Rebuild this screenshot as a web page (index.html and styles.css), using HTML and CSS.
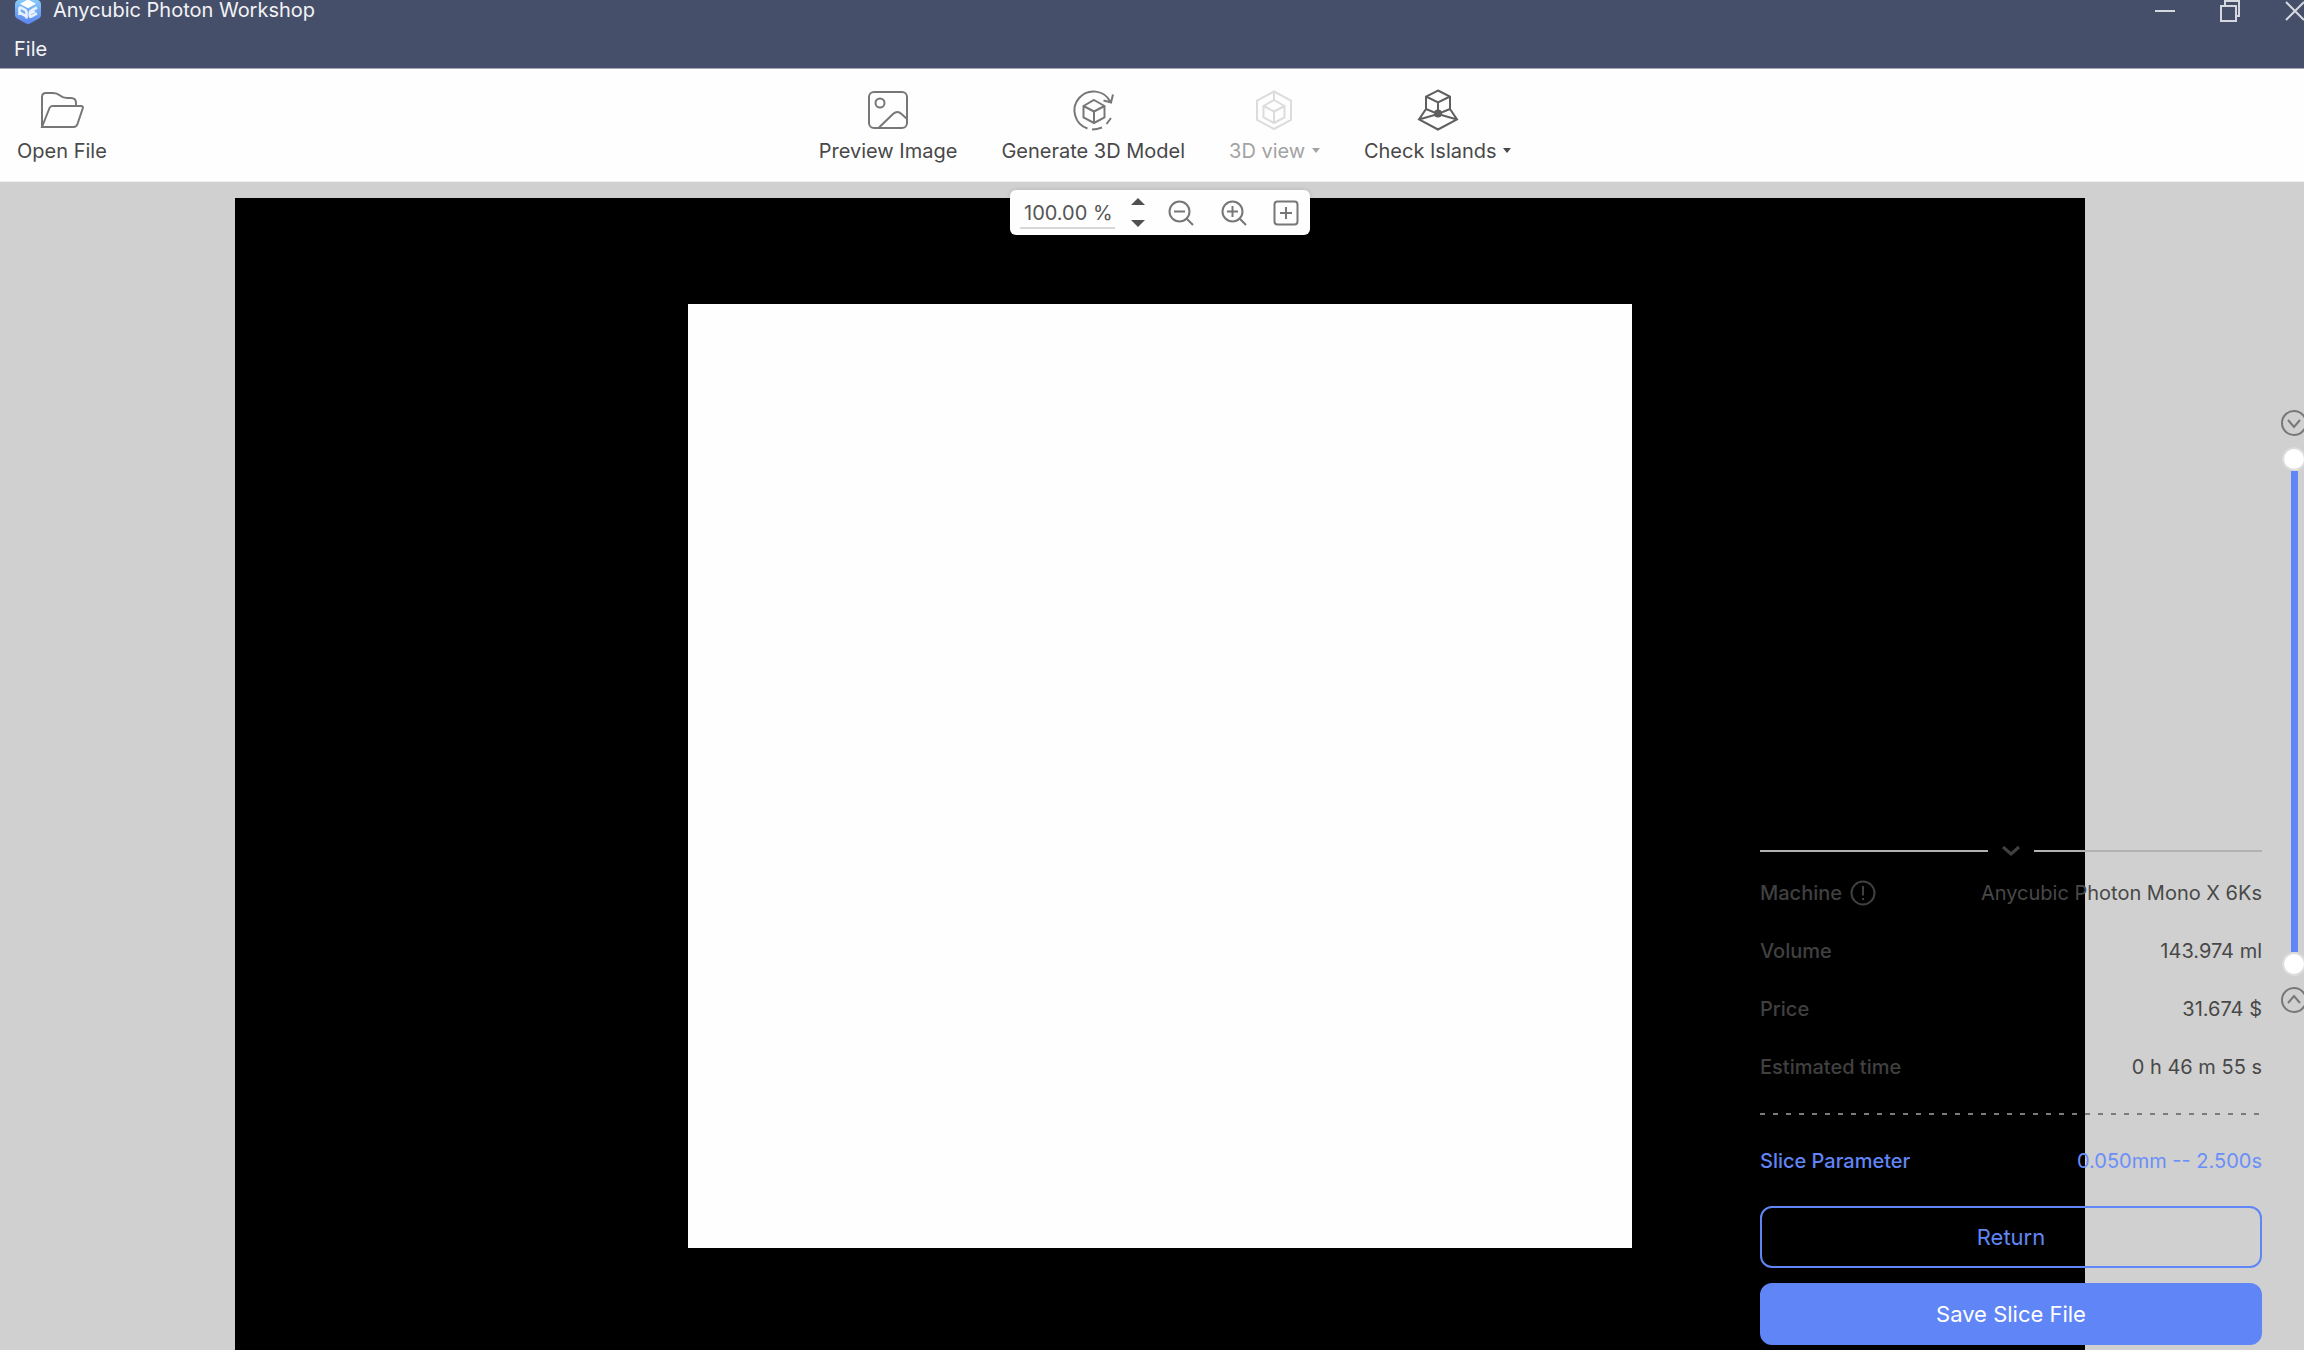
FILE: index.html
```html
<!DOCTYPE html>
<html lang="en">
<head>
<meta charset="utf-8">
<title>Anycubic Photon Workshop</title>
<link rel="stylesheet" href="styles.css">
</head>
<body>
<div class="app">
  <header class="header">
    <div class="titlebar">
      <svg class="logo" width="28" height="32" viewBox="0 0 28 32" aria-hidden="true">
        <defs><linearGradient id="logo-fill" x1="0" y1="0" x2="0" y2="1"><stop offset="0" stop-color="#8fd8fb"/><stop offset="1" stop-color="#5b83ee"/></linearGradient></defs>
        <path d="M12 1.600q2-1.200 4 0l9 5q2 1.200 2 3.400v11q0 2.400-2 3.600l-9 5q-2 1.200-4 0l-9-5q-2-1.200-2-3.600v-11q0-2.200 2-3.400z" fill="url(#logo-fill)"/>
        <path d="M14 5.500l8 4.300-8 4.400-8-4.400z" fill="#fff"/>
        <path d="M5.500 21v-6.500q0-1.500 1.500-.8l4 2.200q1.500.8 1.500 2.500v6M5.500 18.500l7 3.800" fill="none" stroke="#e8f2ff" stroke-width="2.600"/>
        <path d="M23 13.500l-5.500 3q-1.800 1-1.800 2.800v2q0 2 1.800 1l5.500-3M16 19.500l5-2.500" fill="none" stroke="#e8f2ff" stroke-width="2.600"/>
      </svg>
      <h1 class="title">Anycubic Photon Workshop</h1>
      <div class="window-buttons">
        <button class="icon-button" type="button" aria-label="Minimize"><svg width="20" height="22" viewBox="0 0 20 22"><path d="M0 11h20"/></svg></button>
        <button class="icon-button" type="button" aria-label="Restore"><svg width="20" height="22" viewBox="0 0 20 22"><path d="M1 6h15v15H1zM5 6V1h14v15h-3"/></svg></button>
        <button class="icon-button" type="button" aria-label="Close"><svg width="20" height="22" viewBox="0 0 20 22"><path d="M1 2l18 18M19 2L1 20"/></svg></button>
      </div>
    </div>
    <nav class="menubar"><button class="menu" type="button">File</button></nav>
  </header>

  <div class="toolbar" role="toolbar" aria-label="Main">
    <button class="tool" type="button">
      <svg width="44" height="44" viewBox="0 0 44 44"><path d="M2 39V9q0-4 4-4h7q4 0 7 2.500t7 2.500h4q5 0 5 5v2.500M2 39L9.500 20q.8-2 3-2H41q2.500 0 1.700 2.500L37.500 36q-1 3-4 3z"/></svg>
      <span>Open File</span>
    </button>
    <div class="tool-group">
      <button class="tool" type="button">
        <svg width="44" height="44" viewBox="0 0 44 44"><rect x="3" y="4" width="38" height="36" rx="5"/><circle cx="14" cy="15" r="4.500"/><path d="M13 39.500L27 26q4.500-4 8.500 0l5 4.500"/></svg>
        <span>Preview Image</span>
      </button>
      <button class="tool" type="button">
        <svg width="44" height="44" viewBox="0 0 44 44"><path d="M16.500 40.500A19 19 0 1 1 39.500 14M32.500 12.500l7.500 2 2-8M21 41.500q5 0 10-2M35.500 36l4.500-6"/><path d="M23 12l10.500 6v11.500L23 35l-10.500-5.500V18zM12.500 18L23 23.500 33.500 18M23 23.500V35"/></svg>
        <span>Generate 3D Model</span>
      </button>
      <button class="tool" type="button" disabled>
        <svg width="44" height="44" viewBox="0 0 44 44"><path d="M22 3.500l17 9v19.500l-17 9-17-9V12.500zM22 12l10.500 6v11.500L22 35l-10.500-5.500V18zM11.500 18L22 23.500 32.500 18M22 23.500V35M22 3.500V12"/></svg>
        <span>3D view <i class="caret"></i></span>
      </button>
      <button class="tool tool-strong" type="button">
        <svg width="44" height="44" viewBox="0 0 44 44"><path d="M22 2.500l12 6V21L22 26 10 21V8.500zM10 8.500l12 6 12-6M22 14.500V26M10 21L3 31.500l19 10 19-10L34 21M3 31.500L22 26l19 5.500"/><circle class="dot" cx="22" cy="25.500" r="3"/></svg>
        <span>Check Islands <i class="caret"></i></span>
      </button>
    </div>
  </div>

  <main class="stage">
    <div class="canvas"><div class="layer"></div></div>

    <div class="zoombar">
      <input class="zoom-value" type="text" value="100.00 %" aria-label="Zoom">
      <div class="stepper">
        <button class="step step-up" type="button" aria-label="Increase zoom"></button>
        <button class="step step-down" type="button" aria-label="Decrease zoom"></button>
      </div>
      <div class="zoom-buttons">
        <button class="icon-button" type="button" aria-label="Zoom out"><svg width="26" height="26" viewBox="0 0 26 26"><circle cx="11.500" cy="11.500" r="10"/><path d="M6 11.500h11M18.500 18.500l6.500 6.500"/></svg></button>
        <button class="icon-button" type="button" aria-label="Zoom in"><svg width="26" height="26" viewBox="0 0 26 26"><circle cx="11.500" cy="11.500" r="10"/><path d="M6 11.500h11M11.500 6v11M18.500 18.500l6.500 6.500"/></svg></button>
        <button class="icon-button" type="button" aria-label="Fit"><svg width="26" height="26" viewBox="0 0 26 26"><rect x="1.500" y="1.500" width="23" height="23" rx="3"/><path d="M7 13h12M13 7v12"/></svg></button>
      </div>
    </div>

    <section class="panel" aria-label="Slice result">
      <button class="collapse" type="button" aria-label="Collapse"><svg width="18" height="12" viewBox="0 0 18 12"><path d="M1 2l8 7 8-7"/></svg></button>
      <dl class="facts">
        <div class="fact"><dt>Machine <svg width="26" height="26" viewBox="0 0 26 26" aria-hidden="true"><circle cx="13" cy="13" r="11.500"/><path d="M13 6v9.500M13 18v2"/></svg></dt><dd>Anycubic Photon Mono X 6Ks</dd></div>
        <div class="fact"><dt>Volume</dt><dd>143.974 ml</dd></div>
        <div class="fact"><dt>Price</dt><dd>31.674 $</dd></div>
        <div class="fact"><dt>Estimated time</dt><dd>0 h 46 m 55 s</dd></div>
      </dl>
      <div class="dashes"></div>
      <div class="fact parameter"><a class="parameter-link" href="#">Slice Parameter</a><span>0.050mm -- 2.500s</span></div>
      <button class="action" type="button">Return</button>
      <button class="action action-primary" type="button">Save Slice File</button>
    </section>

    <div class="layers">
      <button class="icon-button" type="button" aria-label="Layer down"><svg width="26" height="26" viewBox="0 0 26 26"><circle cx="13" cy="13" r="12"/><path d="M7 10l6 7 6-7"/></svg></button>
      <div class="range">
        <input class="handle" type="range" min="0" max="100" value="100" aria-label="Top layer">
        <input class="handle" type="range" min="0" max="100" value="0" aria-label="Bottom layer">
      </div>
      <button class="icon-button" type="button" aria-label="Layer up"><svg width="26" height="26" viewBox="0 0 26 26"><circle cx="13" cy="13" r="12"/><path d="M7 16l6-7 6 7"/></svg></button>
    </div>
  </main>
</div>
</body>
</html>
```
FILE: styles.css
```css
* { box-sizing: border-box; }

body {
  margin: 0;
  overflow: hidden;
  font-family: Inter, "Liberation Sans", sans-serif;
  font-size: 20px;
  line-height: 24px;
  color: #484848;
}

button {
  margin: 0;
  padding: 0;
  border: 0;
  background: none;
  font: inherit;
  color: inherit;
}

svg {
  display: block;
  fill: none;
  stroke: currentColor;
  stroke-width: 2;
}

/* A maximized window runs a little past the right edge of the screen. */
.app {
  display: flex;
  flex-direction: column;
  height: 100vh;
  margin-right: -16px;
}

.header {
  height: 69px;
  padding-left: 14px;
  overflow: hidden;
  background: #464f69;
  border-bottom: 1px solid #a5a9b6;
  color: #f2f3f6;
}

.titlebar {
  display: flex;
  align-items: center;
  height: 32px;
  margin-top: -6px;
  padding-right: 15px;
}

.logo { stroke: none; }

.title {
  margin: 0 0 0 11px;
  font-size: 20px;
  font-weight: 400;
  line-height: 20px;
}

.window-buttons {
  display: flex;
  gap: 45px;
  margin-left: auto;
  color: #d5d8df;
}

.titlebar .icon-button svg { margin-top: 2px; }

.menubar { padding-top: 11px; }
.menu { display: block; }

.toolbar {
  display: grid;
  grid-template-columns: 1fr auto 1fr;
  height: 113px;
  padding: 19px 17px 0;
  background: #fefefe;
  border-bottom: 1px solid #eeeeee;
}

.tool {
  display: flex;
  flex-direction: column;
  align-items: center;
  gap: 7px;
  justify-self: start;
  align-self: start;
}

.tool svg { color: #777777; }
.tool-strong svg { color: #5f5f5f; }
.tool .dot { fill: currentColor; }
.tool:disabled { color: #a3a3a3; }
.tool:disabled svg { color: #dcdcdc; }

.tool-group {
  display: flex;
  gap: 44px;
  padding-left: 10px;
}

.caret {
  display: inline-block;
  margin-left: 1px;
  vertical-align: 5px;
  border: 4px solid transparent;
  border-top: 5px solid currentColor;
  border-bottom: 0;
}

.stage {
  position: relative;
  display: flex;
  flex: 1;
  min-height: 0;
  padding: 16px 235px 0;
  background: #d0d0d0;
}

.canvas {
  flex: 1;
  padding-top: 106px;
  background: #000000;
}

.layer {
  width: 51%;
  aspect-ratio: 1;
  margin: 0 auto;
  background: #fefefe;
}

/* Floating controls over the canvas */
.zoombar {
  position: absolute;
  top: 8px;
  left: 50%;
  display: flex;
  width: 300px;
  height: 45px;
  margin-left: -150px;
  padding: 0 11px 0 10px;
  background: #fefefe;
  border-radius: 6px;
  box-shadow: 0 0 4px #00000022;
}

.zoom-value {
  width: 95px;
  height: 39px;
  padding: 8px 0 0 4px;
  border: 0;
  border-bottom: 2px solid #d8d8d8;
  background: none;
  font: inherit;
  color: #555555;
}

.stepper {
  display: flex;
  flex-direction: column;
  justify-content: space-between;
  margin-left: 16px;
  padding: 8px 0;
}

.step {
  border: 7px solid transparent;
  color: #505050;
}

.step-up { border-top: 0; border-bottom: 7px solid #505050; }
.step-down { border-bottom: 0; border-top: 7px solid #505050; }

.zoom-buttons {
  display: flex;
  flex: 1;
  align-items: center;
  justify-content: space-between;
  padding-left: 23px;
  color: #777777;
}

.panel {
  position: absolute;
  right: 58px;
  bottom: 5px;
  display: flex;
  flex-direction: column;
  width: 502px;
}

.collapse {
  display: flex;
  align-items: center;
  gap: 14px;
  height: 14px;
  color: #404040;
}

.collapse::before,
.collapse::after {
  content: "";
  flex: 1;
  height: 2px;
  background: #b2b2b2;
}

.collapse svg { stroke-width: 3; }

.facts {
  margin: 6px 0 0;
  line-height: 58px;
}

.fact {
  display: flex;
  justify-content: space-between;
}

.fact dt {
  display: flex;
  align-items: center;
  gap: 8px;
  font-weight: 500;
  color: #404040;
}

.fact dd { margin: 0; }

.dashes {
  height: 2px;
  margin-top: 17px;
  background: repeating-linear-gradient(90deg, #7c7c7c 0 5px, transparent 5px 13px);
}

.parameter {
  margin: 34px 0 33px;
  color: #6a8ff8;
}

.parameter-link {
  font-weight: 500;
  color: #6085f6;
  text-decoration: none;
}

.action {
  height: 62px;
  border: 2px solid #6085f6;
  border-radius: 12px;
  font-size: 22px;
  color: #6085f6;
}

.action-primary {
  margin-top: 15px;
  background: #6085f6;
  color: #ffffff;
}

.layers {
  position: absolute;
  top: 228px;
  right: 13px;
  display: flex;
  flex-direction: column;
  align-items: center;
  gap: 13px;
  color: #777777;
}

.range {
  position: relative;
  width: 24px;
  height: 525px;
  background: linear-gradient(#6085f6, #6085f6) center / 7px 481px no-repeat;
}

.handle {
  position: absolute;
  inset: 0;
  width: 24px;
  height: 525px;
  margin: 0;
  appearance: none;
  background: none;
  writing-mode: vertical-lr;
  direction: rtl;
  pointer-events: none;
}

.handle::-webkit-slider-thumb {
  appearance: none;
  width: 20px;
  height: 20px;
  border-radius: 50%;
  background: #ffffff;
  box-shadow: 0 0 0 2px #dcdcdc;
  pointer-events: auto;
}
```
